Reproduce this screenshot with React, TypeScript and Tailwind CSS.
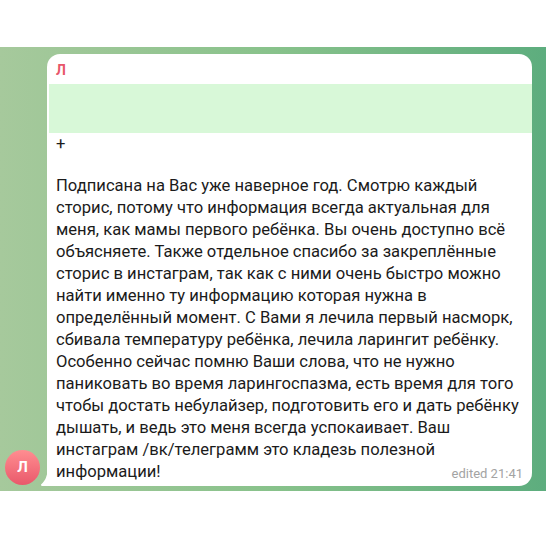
import React from "react";

const body =
  "Подписана на Вас уже наверное год. Смотрю каждый сторис, потому что информация всегда актуальная для меня, как мамы первого ребёнка. Вы очень доступно всё объясняете. Также отдельное спасибо за закреплённые сторис в инстаграм, так как с ними очень быстро можно найти именно ту информацию которая нужна в определённый момент. С Вами я лечила первый насморк, сбивала температуру ребёнка, лечила ларингит ребёнку. Особенно сейчас помню Ваши слова, что не нужно паниковать во время ларингоспазма, есть время для того чтобы достать небулайзер, подготовить его и дать ребёнку дышать, и ведь это меня всегда успокаивает. Ваш инстаграм /вк/телеграмм это кладезь полезной информации!";

function Avatar() {
  return (
    <div className="mb-[1px] flex h-[35px] w-[35px] shrink-0 items-center justify-center rounded-full bg-gradient-to-b from-[#ff8d91] to-[#e9586b] text-[15px] font-bold text-white">
      Л
    </div>
  );
}

function Bubble() {
  return (
    <div className="relative w-[485px] rounded-t-[13px] rounded-br-[13px] bg-white pt-[6px] pb-[3px]">
      <svg
        className="absolute bottom-0 left-[-8px]"
        width="9"
        height="17"
        viewBox="0 0 9 17"
      >
        <path
          d="M3 17h6V0c-.193 2.84-.876 5.767-2.05 8.782-.904 2.325-2.446 4.485-4.625 6.48A1 1 0 003 17z"
          fill="#ffffff"
        />
      </svg>
      <div className="h-[20px] px-[9px] text-[14px] font-bold leading-[20px] text-[#e8566a]">Л</div>
      <div className="mt-[4px] ml-[2px] h-[49px] bg-[#d8f8d8]" />
      <div className="pl-[9px] pr-[6px] text-[16.6px] leading-[22px] text-[#1b1b1b]">
        <div>+</div>
        <div className="h-[20px]" />
        <div>{body}</div>
      </div>
      <span className="absolute right-[9px] bottom-[4px] text-[13px] leading-[16px] text-[#a3a3a3]">
        edited 21:41
      </span>
    </div>
  );
}

export default function App() {
  return (
    <div
      className="h-[539px] w-[546px] bg-white pt-[47px]"
      style={{ fontFamily: "Roboto, 'Noto Sans', sans-serif" }}
    >
      <div className="flex h-[444px] items-end gap-[7px] bg-gradient-to-r from-[#a6c99c] via-[#88c28b] to-[#5dad7e] pl-[5px] pb-[5px]">
        <Avatar />
        <Bubble />
      </div>
    </div>
  );
}
